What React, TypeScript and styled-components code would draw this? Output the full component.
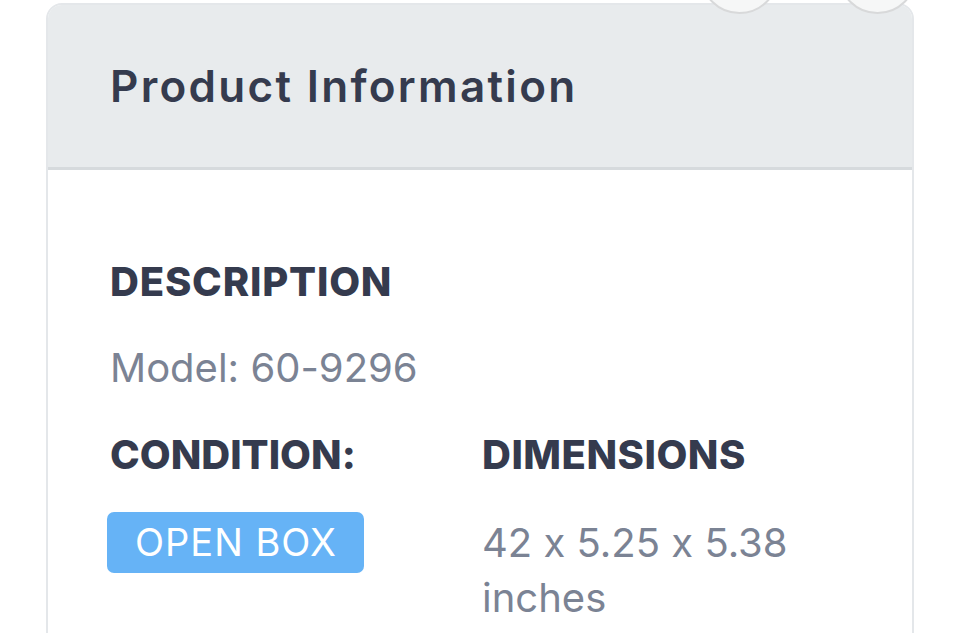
import React from "react";
import styled, { createGlobalStyle } from "styled-components";

const Global = createGlobalStyle`
  html, body { margin: 0; padding: 0; background: #ffffff; }
  body {
    font-family: Inter, "Noto Sans", sans-serif;
    font-feature-settings: "calt" 0;
    overflow: hidden;
  }
`;

const Page = styled.div`
  position: relative;
  padding: 3px 46px 0 46px;
  width: 960px;
  height: 633px;
  box-sizing: border-box;
  overflow: hidden;
`;

const Card = styled.section`
  border: 2px solid #e4e7ea;
  border-radius: 16px;
  overflow: hidden;
  background: #ffffff;
  min-height: 720px;
`;

const Header = styled.header`
  height: 162px;
  background: #e8ebed;
  border-bottom: 3px solid #d6dadd;
  display: flex;
  align-items: center;
  padding-left: 62px;
`;

const Title = styled.h1`
  margin: 0;
  font-size: 44px;
  line-height: 50px;
  font-weight: 600;
  color: #353b4e;
  letter-spacing: 2.3px;
`;

const Body = styled.div`
  padding: 88px 62px 0 62px;
  display: flex;
  flex-direction: column;
`;

const Label = styled.h2<{ $spacing?: number }>`
  margin: 0;
  font-size: 40px;
  font-weight: 800;
  color: #353b4e;
  line-height: 48px;
  letter-spacing: ${(p) => p.$spacing ?? 0}px;
`;

const Value = styled.p<{ $lh?: number }>`
  margin: 0;
  font-size: 40px;
  font-weight: 400;
  color: #7b8394;
  line-height: ${(p) => p.$lh ?? 56}px;
  letter-spacing: 0;
`;

const Model = styled(Value)`
  margin-top: 34px;
`;

const Grid = styled.div`
  display: grid;
  grid-template-columns: 372px 1fr;
  margin-top: 35px;
`;

const Col = styled.div<{ $gap: number }>`
  display: flex;
  flex-direction: column;
  gap: ${(p) => p.$gap}px;
`;

const Badge = styled.span`
  align-self: flex-start;
  background: #66b3f6;
  color: #ffffff;
  border-radius: 7px;
  font-size: 38px;
  line-height: 61px;
  letter-spacing: 1px;
  padding: 0 27px 0 28px;
  margin-left: -3px;
`;

const Circle = styled.div<{ $left: number }>`
  position: absolute;
  top: -65px;
  left: ${(p) => p.$left}px;
  width: 75px;
  height: 75px;
  border-radius: 50%;
  background: #f6f7f7;
  border: 2px solid #d8d9da;
`;

export default function App() {
  return (
    <>
      <Global />
      <Page>
        <Card>
          <Header>
            <Title>Product Information</Title>
          </Header>
          <Body>
            <Label $spacing={0.8}>DESCRIPTION</Label>
            <Model>Model: 60-9296</Model>
            <Grid>
              <Col $gap={33}>
                <Label>CONDITION:</Label>
                <Badge>OPEN BOX</Badge>
              </Col>
              <Col $gap={36}>
                <Label $spacing={0.5}>DIMENSIONS</Label>
                <Value $lh={55}>42 x 5.25 x 5.38 inches</Value>
              </Col>
            </Grid>
          </Body>
        </Card>
        <Circle $left={700} />
        <Circle $left={838} />
      </Page>
    </>
  );
}
